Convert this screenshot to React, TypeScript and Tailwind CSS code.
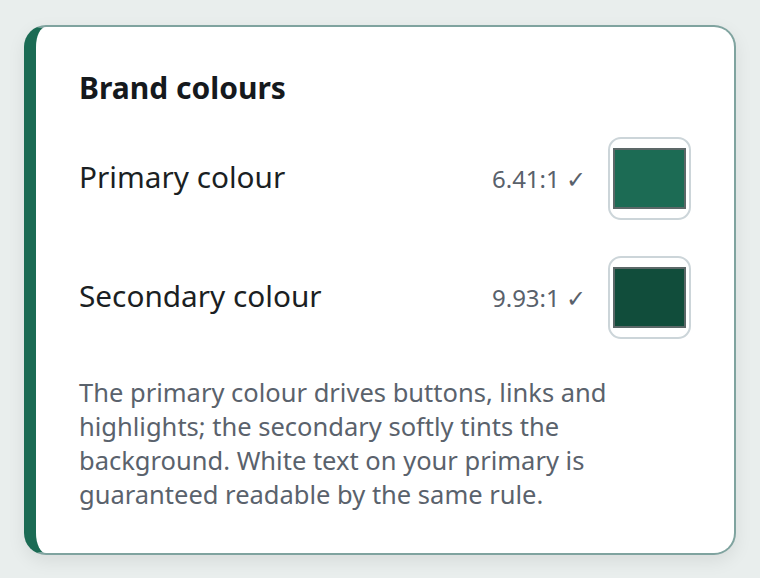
const font = { fontFamily: '"Noto Sans", "Open Sans", sans-serif' };

type RowProps = { label: string; ratio: string; color: string };

function ColourRow({ label, ratio, color }: RowProps) {
  return (
    <div className="flex items-center">
      <span className="flex-1 text-[29.75px] leading-[36px] text-[#1b1f23] -mt-[4px]">{label}</span>
      <span className="mr-[22px] text-[24px] text-[#59616b]">{ratio} ✓</span>
      <div className="w-[83px] h-[83px] rounded-[13px] border-2 border-[#ccd5d9] bg-white px-[3px] py-[9px]">
        <div className="w-full h-full border-2 border-[#5c6868]" style={{ backgroundColor: color }} />
      </div>
    </div>
  );
}

export default function App() {
  return (
    <div className="min-h-[578px] bg-[#e9eeed] p-[24px] pt-[25px]" style={font}>
      <div className="rounded-[22px] border-2 border-l-[12px] border-[#7fa39f] border-l-[#1b6b54] bg-white px-[43px] pt-[43px] pb-[42px] shadow-[0_6px_18px_rgba(0,0,0,0.08)]">
        <h2 className="text-[30px] font-bold leading-[36px] text-[#15191d]">Brand colours</h2>
        <div className="mt-[31px] flex flex-col gap-[36px]">
          <ColourRow label="Primary colour" ratio="6.41:1" color="#1c6b54" />
          <ColourRow label="Secondary colour" ratio="9.93:1" color="#114d3b" />
        </div>
        <p className="mt-[36px] text-[25.5px] leading-[34px] text-[#5a626c]">
          The primary colour drives buttons, links and highlights; the secondary softly tints the
          background. White text on your primary is guaranteed readable by the same rule.
        </p>
      </div>
    </div>
  );
}
